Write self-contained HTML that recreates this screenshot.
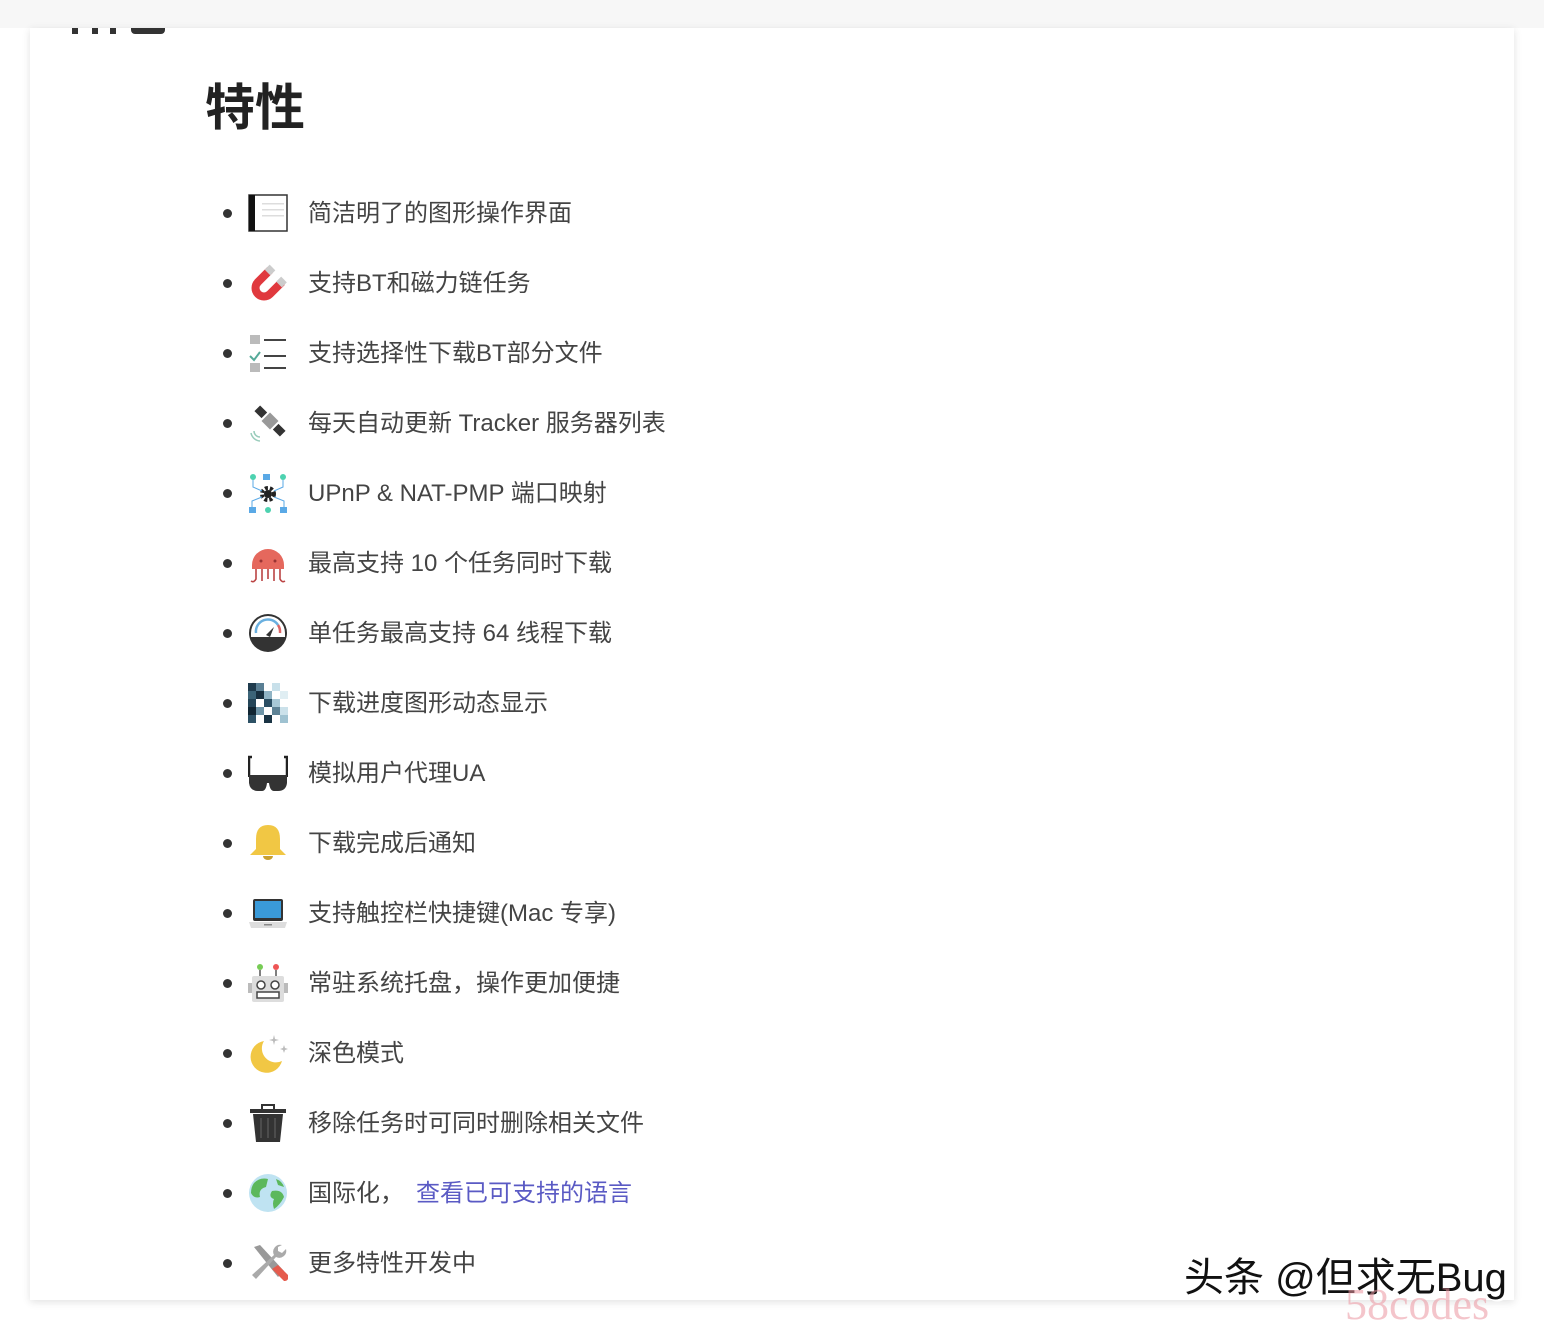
<!DOCTYPE html>
<html><head><meta charset="utf-8"><style>
html,body{margin:0;padding:0;background:#fff;width:1544px;height:1334px;overflow:hidden;position:relative;font-family:"Liberation Sans","Noto Sans CJK SC",sans-serif}
.top{position:absolute;left:0;top:0;width:1544px;height:28px;background:#f7f7f7}
.card{position:absolute;left:30px;top:28px;width:1484px;height:1272px;background:#fff;box-shadow:0 2px 8px rgba(0,0,0,.12)}
h1{position:absolute;left:205px;top:78px;margin:0;font-size:50px;line-height:60px;font-weight:bold;color:#222}
.row{position:absolute;left:0;height:40px;width:900px}
.dot{position:absolute;left:223px;top:16px;width:9px;height:9px;border-radius:50%;background:#333}
.row svg{position:absolute;left:248px;top:0}
.t{position:absolute;left:308px;top:5px;font-size:24px;line-height:32px;color:#444;white-space:nowrap}
.t a{color:#5a5ac4;text-decoration:none;margin-left:12px}
.wm{position:absolute;left:1184px;top:1253px;font-size:40px;line-height:50px;color:#111;text-shadow:2px 2px 0 #fff,-1px -1px 0 #fff;white-space:nowrap}
.wm2{position:absolute;left:1345px;top:1280px;font-family:"Liberation Serif",serif;font-size:44px;line-height:50px;color:rgba(235,150,160,.55);white-space:nowrap}
</style></head><body>
<div class="top"></div>
<div class="card"></div>
<div style="position:absolute;left:72px;top:28px;width:6px;height:6px;background:#333"></div>
<div style="position:absolute;left:92px;top:28px;width:6px;height:6px;background:#333"></div>
<div style="position:absolute;left:110px;top:28px;width:6px;height:6px;background:#333"></div>
<div style="position:absolute;left:131px;top:28px;width:34px;height:6px;background:#333;border-radius:0 0 4px 4px"></div>
<h1>特性</h1>

<div class="row" style="top:193px"><div class="dot"></div>
<svg width="40" height="40"><rect x="1" y="2" width="38" height="36" fill="#fff" stroke="#333" stroke-width="1.5"/><rect x="1" y="2" width="6" height="36" fill="#111"/><rect x="14" y="10" width="22" height="1.5" fill="#ddd"/><rect x="14" y="16" width="22" height="1.5" fill="#ddd"/><rect x="14" y="22" width="22" height="1.5" fill="#ddd"/></svg>
<div class="t">简洁明了的图形操作界面</div></div>

<div class="row" style="top:263px"><div class="dot"></div>
<svg width="40" height="40"><path d="M22 7 L10 19 A8 8 0 0 0 22 31 L34 19" fill="none" stroke="#e0393e" stroke-width="8"/><path d="M18 11 L26 3" stroke="#fff" stroke-width="0"/><path d="M19.5 9.5 L24.5 4.5" stroke="#ccc" stroke-width="8" stroke-linecap="butt" transform="rotate(0)"/><path d="M31 21.5 L36 16.5" stroke="#ccc" stroke-width="8"/></svg>
<div class="t">支持BT和磁力链任务</div></div>

<div class="row" style="top:333px"><div class="dot"></div>
<svg width="40" height="40"><rect x="2" y="2" width="10" height="9" fill="#bbb"/><path d="M2 23 L6 27 L12 19" stroke="#5a9" stroke-width="2" fill="none"/><rect x="2" y="30" width="10" height="9" fill="#bbb"/><rect x="16" y="6" width="22" height="2" fill="#444"/><rect x="16" y="22" width="22" height="2" fill="#444"/><rect x="16" y="34" width="22" height="2" fill="#444"/></svg>
<div class="t">支持选择性下载BT部分文件</div></div>

<div class="row" style="top:403px"><div class="dot"></div>
<svg width="40" height="40"><g transform="rotate(45 22 18)"><rect x="4" y="14" width="10" height="8" fill="#333"/><rect x="16" y="12" width="12" height="12" fill="#999"/><rect x="30" y="14" width="10" height="8" fill="#333"/></g><path d="M3 30 A10 10 0 0 0 12 38 M6 28 A6 6 0 0 0 12 34" stroke="#9cb" stroke-width="1.5" fill="none"/></svg>
<div class="t">每天自动更新 Tracker 服务器列表</div></div>

<div class="row" style="top:473px"><div class="dot"></div>
<svg width="40" height="40"><circle cx="5" cy="4" r="3" fill="#4dd2b0"/><rect x="15" y="1" width="7" height="6" fill="#5aa9e6"/><circle cx="35" cy="4" r="3" fill="#4dd2b0"/><rect x="1" y="34" width="7" height="6" fill="#5aa9e6"/><circle cx="20" cy="37" r="3" fill="#4dd2b0"/><rect x="32" y="34" width="7" height="6" fill="#5aa9e6"/><circle cx="20" cy="21" r="6" fill="none" stroke="#222" stroke-width="4" stroke-dasharray="3 2"/><circle cx="20" cy="21" r="4" fill="#222"/><path d="M5 7V14L14 18M35 7V14L26 18M4 34V28L14 24M36 34V28L26 24" stroke="#5aa9e6" fill="none"/></svg>
<div class="t">UPnP &amp; NAT-PMP 端口映射</div></div>

<div class="row" style="top:543px"><div class="dot"></div>
<svg width="40" height="40"><path d="M4 22 A16 16 0 0 1 36 22 L36 26 L4 26Z" fill="#e5685d"/><circle cx="13" cy="18" r="1.5" fill="#933"/><circle cx="27" cy="18" r="1.5" fill="#933"/><path d="M8 26 V36 Q6 40 3 38 M14 26 V38 M20 26 V36 M26 26 V38 M32 26 V36 Q34 40 37 38" stroke="#b44" stroke-width="1.6" fill="none"/></svg>
<div class="t">最高支持 10 个任务同时下载</div></div>

<div class="row" style="top:613px"><div class="dot"></div>
<svg width="40" height="40"><circle cx="20" cy="20" r="19" fill="#333"/><path d="M3 20 A17 17 0 0 1 37 20 L37 24 L3 24Z" fill="#fff"/><path d="M8 20 A12 12 0 0 1 30 12" stroke="#6ab0e0" stroke-width="2.5" fill="none"/><path d="M30 12 A12 12 0 0 1 32 20" stroke="#d66" stroke-width="2.5" fill="none"/><path d="M18 22 L26 14 L22 24Z" fill="#333"/></svg>
<div class="t">单任务最高支持 64 线程下载</div></div>

<div class="row" style="top:683px"><div class="dot"></div>
<svg width="40" height="40"><rect x="0" y="0" width="8" height="8" fill="#1f3b4d"/><rect x="8" y="0" width="8" height="8" fill="#5a7f94"/><rect x="24" y="0" width="8" height="8" fill="#c8e0ea"/><rect x="0" y="8" width="8" height="8" fill="#3c6478"/><rect x="8" y="8" width="8" height="8" fill="#183040"/><rect x="16" y="8" width="8" height="8" fill="#8fb3c4"/><rect x="32" y="8" width="8" height="8" fill="#e0eef3"/><rect x="0" y="16" width="8" height="8" fill="#244558"/><rect x="16" y="16" width="8" height="8" fill="#2a4e63"/><rect x="24" y="16" width="8" height="8" fill="#a7c8d6"/><rect x="8" y="24" width="8" height="8" fill="#6e95a8"/><rect x="0" y="24" width="8" height="8" fill="#102532"/><rect x="24" y="24" width="8" height="8" fill="#5d8295"/><rect x="32" y="24" width="8" height="8" fill="#cbe1ea"/><rect x="0" y="32" width="8" height="8" fill="#2d5165"/><rect x="16" y="32" width="8" height="8" fill="#1a3444"/><rect x="32" y="32" width="8" height="8" fill="#9fc2d1"/></svg>
<div class="t">下载进度图形动态显示</div></div>

<div class="row" style="top:753px"><div class="dot"></div>
<svg width="40" height="40"><path d="M4 4 H1 V24 M36 4 H39 V24" stroke="#222" stroke-width="2.5" fill="none"/><path d="M1 22 H39 V30 Q38 38 30 38 H26 Q22 38 21 30 H19 Q18 38 14 38 H10 Q2 38 1 30Z" fill="#333"/></svg>
<div class="t">模拟用户代理UA</div></div>

<div class="row" style="top:823px"><div class="dot"></div>
<svg width="40" height="40"><path d="M20 2 Q8 2 8 16 V26 L2 32 H38 L32 26 V16 Q32 2 20 2Z" fill="#f1c744"/><path d="M15 33 A5 4 0 0 0 25 33Z" fill="#c9a030"/></svg>
<div class="t">下载完成后通知</div></div>

<div class="row" style="top:893px"><div class="dot"></div>
<svg width="40" height="40"><rect x="5" y="6" width="30" height="22" rx="2" fill="#333"/><rect x="7" y="8" width="26" height="17" fill="#3a9ad9"/><path d="M1 29 H39 L37 35 H3Z" fill="#ddd"/><rect x="16" y="31" width="8" height="1.5" fill="#888"/></svg>
<div class="t">支持触控栏快捷键(Mac 专享)</div></div>

<div class="row" style="top:963px"><div class="dot"></div>
<svg width="40" height="40"><circle cx="12" cy="4" r="3" fill="#7c5"/><circle cx="28" cy="4" r="3" fill="#e55"/><path d="M12 7V13M28 7V13" stroke="#555" stroke-width="1.5"/><rect x="0" y="20" width="4" height="10" fill="#bbb"/><rect x="36" y="20" width="4" height="10" fill="#bbb"/><rect x="4" y="13" width="32" height="26" rx="2" fill="#ddd"/><circle cx="13" cy="22" r="4" fill="#fff" stroke="#444" stroke-width="1.5"/><circle cx="27" cy="22" r="4" fill="#fff" stroke="#444" stroke-width="1.5"/><rect x="9" y="29" width="22" height="6" fill="#fff" stroke="#444" stroke-width="1.5"/></svg>
<div class="t">常驻系统托盘，操作更加便捷</div></div>

<div class="row" style="top:1033px"><div class="dot"></div>
<svg width="40" height="40"><path d="M16 8 A16 16 0 1 0 34 28 A14 14 0 0 1 16 8Z" fill="#f1c744"/><path d="M26 2 L27 6 L31 7 L27 8 L26 12 L25 8 L21 7 L25 6Z" fill="#bbb"/><path d="M36 12 L37 15 L40 16 L37 17 L36 20 L35 17 L32 16 L35 15Z" fill="#bbb"/></svg>
<div class="t">深色模式</div></div>

<div class="row" style="top:1103px"><div class="dot"></div>
<svg width="40" height="40"><path d="M14 6 V2 H26 V6" stroke="#333" stroke-width="2" fill="none"/><rect x="2" y="6" width="36" height="4" fill="#333"/><path d="M5 11 H35 L32 39 H8Z" fill="#333"/><path d="M13 15V35M20 15V35M27 15V35" stroke="#555" stroke-width="1.5"/></svg>
<div class="t">移除任务时可同时删除相关文件</div></div>

<div class="row" style="top:1173px"><div class="dot"></div>
<svg width="40" height="40"><circle cx="20" cy="20" r="19" fill="#bfe3f2"/><path d="M6 10 Q12 4 20 6 L18 14 Q10 16 12 24 Q6 26 3 20 Q3 14 6 10Z" fill="#5cb85c"/><path d="M24 18 Q34 16 36 24 Q32 32 26 36 Q24 30 26 26 Q20 24 24 18Z" fill="#5cb85c"/><path d="M28 6 Q34 8 36 14 L30 12Z" fill="#5cb85c"/></svg>
<div class="t">国际化，<a>查看已可支持的语言</a></div></div>

<div class="row" style="top:1243px"><div class="dot"></div>
<svg width="40" height="40"><path d="M6 4 L12 2 L36 28 L30 34Z" fill="#999"/><path d="M24 26 L36 38 A4 4 0 0 0 40 32 L30 22Z" fill="#e55b4d"/><path d="M34 2 A7 7 0 0 0 26 12 L4 32 L8 36 L28 14 A7 7 0 0 0 38 6 L34 10 L30 8 L30 4Z" fill="#aaa"/></svg>
<div class="t">更多特性开发中</div></div>

<div class="wm">头条 @但求无Bug</div>
<div class="wm2">58codes</div>
</body></html>
